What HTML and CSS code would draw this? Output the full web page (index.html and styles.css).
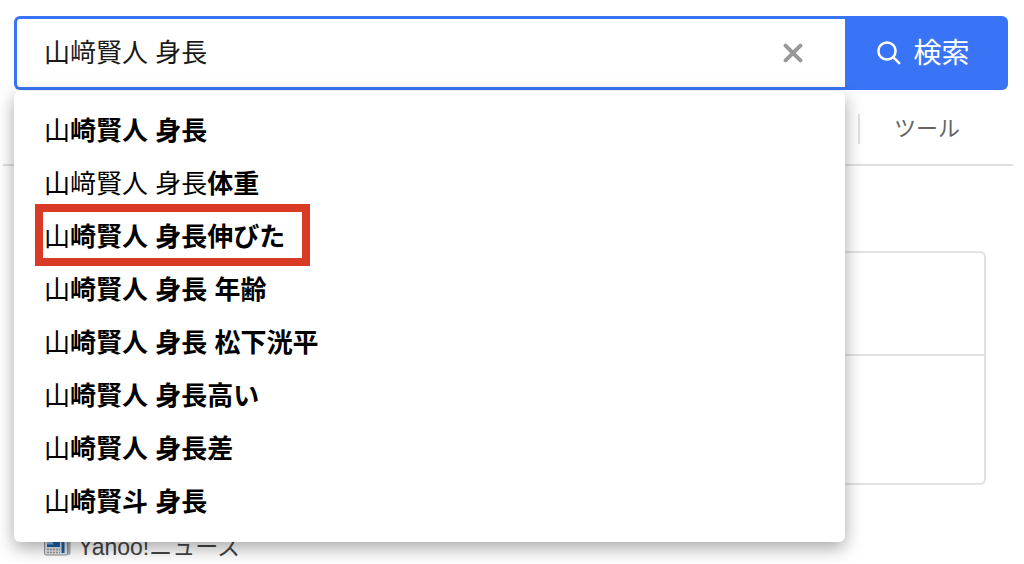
FILE: index.html
```
<!DOCTYPE html>
<html lang="ja">
<head>
<meta charset="utf-8">
<title>山﨑賢人 身長</title>
<meta name="viewport" content="width=device-width, initial-scale=1">
<link rel="stylesheet" href="styles.css">
</head>
<body>
<header class="header">
  <form class="search" role="search">
    <div class="field">
      <input class="field-input" type="text" aria-label="検索キーワード" value="山﨑賢人 身長">
      <button class="clear" type="button" aria-label="クリア">
        <svg class="clear-icon" viewBox="0 0 20 20" aria-hidden="true"><path d="M2.600 2.600 17.400 17.400M17.400 2.600 2.600 17.400"/></svg>
      </button>
      <ul class="suggest">
        <li class="suggest-item">山<b>崎賢人 身長</b></li>
        <li class="suggest-item">山﨑賢人 身長<b>体重</b></li>
        <li class="suggest-item"><span class="marked">山<b>崎賢人 身長伸びた</b></span></li>
        <li class="suggest-item">山<b>崎賢人 身長 年齢</b></li>
        <li class="suggest-item">山<b>崎賢人 身長 松下洸平</b></li>
        <li class="suggest-item">山<b>崎賢人 身長高い</b></li>
        <li class="suggest-item">山<b>崎賢人 身長差</b></li>
        <li class="suggest-item">山<b>崎賢斗 身長</b></li>
      </ul>
    </div>
    <button class="submit" type="submit">
      <svg class="submit-icon" viewBox="0 0 24 24" aria-hidden="true"><circle cx="10" cy="10" r="8.6"/><path d="M16.2 16.2 22.2 22.2"/></svg>
      <span>検索</span>
    </button>
  </form>
</header>
<nav class="tabs">
  <a class="tool" href="#">ツール</a>
</nav>
<main class="results">
  <div class="card">
    <div class="card-top"></div>
    <div class="card-bottom"></div>
  </div>
  <a class="source" href="#">
    <svg class="source-icon" viewBox="0 0 27 24" aria-hidden="true">
      <rect x="3" y="3" width="23.5" height="17" rx="2" fill="#a9adb2"/>
      <rect x="0.5" y="1" width="23" height="19" rx="1.5" fill="#e3e5e8" stroke="#8d9196"/>
      <rect x="3" y="3" width="13" height="9" fill="#1b5fa8"/>
      <path d="M3 9.500V7L7 5.500 10 9.500Z" fill="#7db8e6"/>
      <path d="M19 3V18" stroke="#1b5fa8" stroke-width="3"/>
      <path d="M3 14.500H16M3 17.500H16" stroke="#979ba0" stroke-width="1.500" stroke-dasharray="2 1"/>
    </svg>
    <span>Yahoo!ニュース</span>
  </a>
</main>
</body>
</html>
```
FILE: styles.css
```
* {
  box-sizing: border-box;
}

body {
  margin: 0;
  overflow: hidden;
  background: #fff;
  color: #000;
  font-family: "Liberation Sans", "Noto Sans CJK JP", sans-serif;
  font-size: 26px;
}

.header {
  padding: 16px 16px 0 14px;
}

.search {
  display: flex;
  height: 74px;
}

.field {
  position: relative;
  display: flex;
  flex: 1;
  align-items: center;
  min-width: 0;
  padding-right: 36px;
  border: 3px solid #3974f6;
  border-right: 0;
  border-radius: 6px 0 0 6px;
}

.field-input {
  flex: 1;
  min-width: 0;
  height: 100%;
  padding: 0 0 6px 27px;
  border: 0;
  outline: 0;
  background: transparent;
  color: #1a1a1a;
  font: inherit;
}

.clear {
  display: flex;
  padding: 6px;
  border: 0;
  background: none;
}

.clear-icon {
  width: 20px;
  height: 20px;
  fill: none;
  stroke: #999;
  stroke-width: 4;
  stroke-linecap: round;
}

.submit {
  display: flex;
  align-items: center;
  justify-content: center;
  gap: 12px;
  width: 163px;
  padding: 0 12px 0 6px;
  border: 0;
  border-radius: 0 6px 6px 0;
  background: #3974f6;
  color: #fff;
  font: inherit;
  font-size: 28px;
}

.submit span {
  padding-bottom: 4px;
}

.submit-icon {
  width: 24px;
  height: 24px;
  fill: none;
  stroke: #fff;
  stroke-width: 2.5;
  stroke-linecap: round;
}

.suggest {
  position: absolute;
  z-index: 1;
  top: 100%;
  right: 0;
  left: -3px;
  margin: 4px 0 0;
  padding: 14px 0 13px;
  border-radius: 6px;
  background: #fff;
  box-shadow: 0 6px 18px rgba(0, 0, 0, 0.35);
  list-style: none;
}

.suggest-item {
  padding: 0 30px;
  line-height: 53px;
}

.marked {
  position: relative;
}

.marked::after {
  position: absolute;
  inset: -18px -25px -14px -9px;
  border: 8px solid #d93a26;
  content: "";
}

.tabs {
  display: flex;
  justify-content: flex-end;
  align-items: center;
  height: 76px;
  margin: 0 11px 0 3px;
  padding: 4px 53px 0 0;
  border-bottom: 2px solid #e0e0e0;
}

.tool {
  padding-left: 34px;
  border-left: 2px solid #e0e0e0;
  color: #666;
  font-size: 22px;
  line-height: 30px;
  text-decoration: none;
}

.results {
  padding: 85px 38px 0 44px;
}

.card {
  border: 2px solid #e2e2e2;
  border-radius: 6px;
}

.card-top {
  height: 103px;
  border-bottom: 2px solid #e2e2e2;
}

.card-bottom {
  height: 127px;
}

.source {
  display: flex;
  align-items: center;
  gap: 7px;
  margin-top: 46px;
  color: #444;
  font-size: 23px;
  line-height: 32px;
  text-decoration: none;
}

.source-icon {
  width: 27px;
  height: 24px;
}
```
